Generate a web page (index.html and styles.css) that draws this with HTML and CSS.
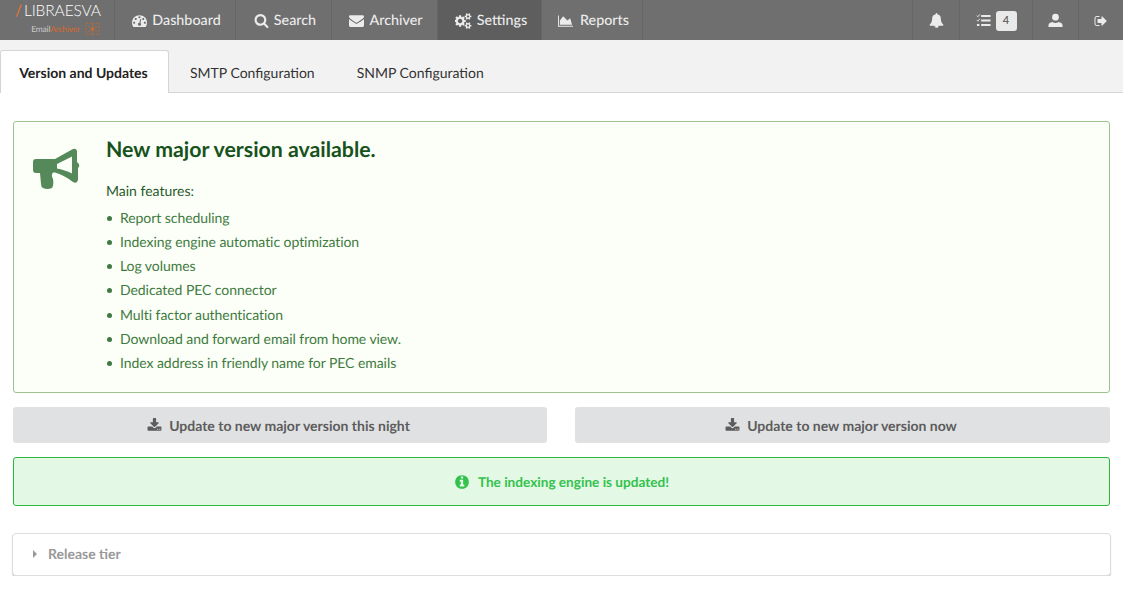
FILE: index.html
```html
<!DOCTYPE html>
<html lang="en">
<head>
  <meta charset="UTF-8">
  <title>Settings - Version and Updates</title>
  <link rel="stylesheet" href="styles.css">
</head>
<body>
  <!-- Top navigation -->
  <nav class="navbar">
    <a class="brand">
      <span class="brand-name"><span class="brand-slash">/</span>LIBRAESVA</span>
      <span class="brand-sub">
        <span class="brand-email">Email<span class="brand-archiver">Archiver</span></span>
        <svg class="brand-icon" viewBox="0 0 16 18">
          <path d="M1 3h14v12H1z" fill="none" stroke="#d9692b" stroke-width="1" stroke-dasharray="1.5 2"/>
          <path d="M8 3v12M3 6l5 3 5-3M3 12l5-3 5 3" fill="none" stroke="#d9692b" stroke-width=".6"/>
          <circle cx="8" cy="9" r="1.5" fill="#d9692b"/>
        </svg>
      </span>
    </a>
    <a class="nav-item nav-dashboard">
      <svg class="icon" viewBox="0 0 1792 1792"><path d="M384 1152q0-53-37.5-90.5t-90.5-37.5-90.5 37.5-37.5 90.5 37.5 90.5 90.5 37.5 90.5-37.5 37.5-90.5zm192-448q0-53-37.5-90.5t-90.5-37.5-90.5 37.5-37.5 90.5 37.5 90.5 90.5 37.5 90.5-37.5 37.5-90.5zm428 481l101-382q6-26-7.5-48.5t-38.5-29.5-48 6.5-30 39.5l-101 382q-60 5-107 43.5t-63 98.5q-20 77 20 146t117 89 146-20 89-117q16-60-6-117t-72-91zm660-33q0-53-37.5-90.5t-90.5-37.5-90.5 37.5-37.5 90.5 37.5 90.5 90.5 37.5 90.5-37.5 37.5-90.5zm-640-640q0-53-37.5-90.5t-90.5-37.5-90.5 37.5-37.5 90.5 37.5 90.5 90.5 37.5 90.5-37.5 37.5-90.5zm448 192q0-53-37.5-90.5t-90.5-37.5-90.5 37.5-37.5 90.5 37.5 90.5 90.5 37.5 90.5-37.5 37.5-90.5zm320 448q0 261-141 483-19 29-54 29h-1402q-35 0-54-29-141-221-141-483 0-182 71-348t191-286 286-191 348-71 348 71 286 191 191 286 71 348z"/></svg>
      Dashboard
    </a>
    <a class="nav-item nav-search">
      <svg class="icon" viewBox="0 0 1792 1792"><path d="M1216 832q0-185-131.5-316.5t-316.5-131.5-316.5 131.5-131.5 316.5 131.5 316.5 316.5 131.5 316.5-131.5 131.5-316.5zm512 832q0 52-38 90t-90 38q-54 0-90-38l-343-342q-179 124-399 124-143 0-273.5-55.5t-225-150-150-225-55.5-273.5 55.5-273.5 150-225 225-150 273.5-55.5 273.5 55.5 225 150 150 225 55.5 273.5q0 220-124 399l343 343q37 37 37 90z"/></svg>
      Search
    </a>
    <a class="nav-item nav-archiver">
      <svg class="icon" viewBox="0 0 1792 1792"><path d="M1792 710v794q0 66-47 113t-113 47h-1472q-66 0-113-47t-47-113v-794q44 49 101 87 362 246 497 345 57 42 92.5 65.5t94.5 48 110 24.5h2q51 0 110-24.5t94.5-48 92.5-65.5q170-123 498-345 57-39 100-87zm0-294q0 79-49 151t-122 123q-376 261-468 325-10 7-42.5 30.5t-54 38-52 32.5-57.5 27-50 9h-2q-23 0-50-9t-57.5-27-52-32.5-54-38-42.5-30.5q-91-64-262-182.5t-205-142.5q-62-42-117-115.5t-55-136.5q0-78 41.5-130t118.5-52h1472q65 0 112.5 47t47.5 113z"/></svg>
      Archiver
    </a>
    <a class="nav-item nav-settings active">
      <svg class="icon icon-wide" viewBox="0 0 1920 1792"><path d="M832 896q0-106-75-181t-181-75-181 75-75 181 75 181 181 75 181-75 75-181zm768 512q0-52-38-90t-90-38-90 38-38 90q0 53 37.5 90.5t90.5 37.5 90.5-37.5 37.5-90.5zm0-1024q0-52-38-90t-90-38-90 38-38 90q0 53 37.5 90.5t90.5 37.5 90.5-37.5 37.5-90.5zm-384 421v185q0 10-7 19.5t-16 10.5l-155 24q-11 35-32 76 34 48 90 115 7 11 7 20 0 12-7 19-23 30-82.5 89.5t-78.5 59.5q-11 0-21-7l-115-90q-37 19-77 31-11 108-23 155-7 24-30 24h-186q-11 0-20-7.5t-10-17.5l-23-153q-34-10-75-31l-118 89q-7 7-20 7-11 0-21-8-144-133-144-160 0-9 7-19 10-14 41-53t47-61q-23-44-35-82l-152-24q-10-1-17-9.5t-7-19.5v-185q0-10 7-19.5t16-10.5l155-24q11-35 32-76-34-48-90-115-7-11-7-20 0-12 7-20 22-30 82-89t79-59q11 0 21 7l115 90q34-18 77-32 11-108 23-154 7-24 30-24h186q11 0 20 7.5t10 17.5l23 153q34 10 75 31l118-89q8-7 20-7 11 0 21 8 144 133 144 160 0 8-7 19-12 16-42 54t-45 60q23 48 34 82l152 23q10 2 17 10.5t7 19.5zm640 533v140q0 16-149 31-12 27-30 52 51 113 51 138 0 4-4 7-122 71-124 71-8 0-46-47t-52-68q-20 2-30 2t-30-2q-14 21-52 68t-46 47q-2 0-124-71-4-3-4-7 0-25 51-138-18-25-30-52-149-15-149-31v-140q0-16 149-31 13-29 30-52-51-113-51-138 0-4 4-7 4-2 35-20t59-34 30-16q8 0 46 46.5t52 67.5q20-2 30-2t30 2q51-71 92-112l6-2q4 0 124 70 4 3 4 7 0 25-51 138 17 23 30 52 149 15 149 31zm0-1024v140q0 16-149 31-12 27-30 52 51 113 51 138 0 4-4 7-122 71-124 71-8 0-46-47t-52-68q-20 2-30 2t-30-2q-14 21-52 68t-46 47q-2 0-124-71-4-3-4-7 0-25 51-138-18-25-30-52-149-15-149-31v-140q0-16 149-31 13-29 30-52-51-113-51-138 0-4 4-7 4-2 35-20t59-34 30-16q8 0 46 46.5t52 67.5q20-2 30-2t30 2q51-71 92-112l6-2q4 0 124 70 4 3 4 7 0 25-51 138 17 23 30 52 149 15 149 31z"/></svg>
      Settings
    </a>
    <a class="nav-item nav-reports">
      <svg class="icon icon-chart" viewBox="0 0 2048 1792"><path d="M2048 1536v128h-2048v-1536h128v1408h1920zm-384-1024l256 896h-1664v-576l448-576 576 576z"/></svg>
      Reports
    </a>

    <div class="nav-right">
      <a class="nav-item nav-bell">
        <svg class="icon" viewBox="0 0 1792 1792"><path d="M912 1696q0-16-16-16-59 0-101.5-42.5t-42.5-101.5q0-16-16-16t-16 16q0 73 51.5 124.5t124.5 51.5q16 0 16-16zm816-288q0 52-38 90t-90 38h-448q0 106-75 181t-181 75-181-75-75-181h-448q-52 0-90-38t-38-90q50-42 91-88t85-119.5 74.5-158.5 50-206 19.5-260q0-152 117-282.5t307-158.5q-8-19-8-39 0-40 28-68t68-28 68 28 28 68q0 20-8 39 190 28 307 158.5t117 282.5q0 139 19.5 260t50 206 74.5 158.5 85 119.5 91 88z"/></svg>
      </a>
      <a class="nav-item nav-tasks">
        <svg class="icon" viewBox="0 0 16 16">
          <path d="M5.500 2h10v2.200h-10zM5.500 6.800h10V9h-10zM5.500 11.600h10v2.200h-10zM1 11.600h2.600v2.200H1z"/>
          <path d="M.8 7.500l1.200 1.200 2.200-2.600M.8 2.800l1.200 1.200 2.200-2.600" fill="none" stroke="currentColor" stroke-width="1"/>
        </svg>
        <span class="badge">4</span>
      </a>
      <a class="nav-item nav-user">
        <svg class="icon icon-user" viewBox="0 0 16 16">
          <circle cx="8" cy="4.500" r="3.600"/>
          <path d="M.5 15v-2c0-1.800 2-2.900 4.300-3.300 1 .6 2 .9 3.200.9s2.200-.3 3.200-.9c2.300.4 4.300 1.500 4.300 3.300v2z"/>
        </svg>
      </a>
      <a class="nav-item nav-logout">
        <svg class="icon" viewBox="0 0 1792 1792"><path d="M704 1440q0 4 1 20t.5 26.500-3 23.500-10 19.500-20.500 6.500h-320q-119 0-203.500-84.500t-84.500-203.500v-704q0-119 84.500-203.500t203.500-84.500h320q13 0 22.500 9.500t9.500 22.500q0 4 1 20t.5 26.500-3 23.500-10 19.500-20.500 6.500h-320q-66 0-113 47t-47 113v704q0 66 47 113t113 47h288 11 13t11.500 1 11.500 3 8 5.500 7 9 2 13.500zm928-544q0 26-19 45l-544 544q-19 19-45 19t-45-19-19-45v-288h-448q-26 0-45-19t-19-45v-384q0-26 19-45t45-19h448v-288q0-26 19-45t45-19 45 19l544 544q19 19 19 45z"/></svg>
      </a>
    </div>
  </nav>

  <!-- Tabs -->
  <div class="tabs">
    <a class="tab active">Version and Updates</a>
    <a class="tab">SMTP Configuration</a>
    <a class="tab">SNMP Configuration</a>
  </div>

  <main class="content">
    <section class="notice">
      <svg class="notice-icon" viewBox="0 0 48 42"><path fill-rule="evenodd" d="M3 11H22L39 1.500Q43-.5 44 3V14Q48 17 45 20V32Q44 36 40 34C33 29 28 26 22 24.500H20C18 27 19 29 20 31Q21 37 19 40Q14 42 10 40Q8 39 8 36L7 25H3Q0 25 0 22V14Q0 11 3 11ZM24 16V20.500C29 21.500 34 23 39 25.500V8.500Z"/></svg>
      <div class="notice-body">
        <h2>New major version available.</h2>
        <p>Main features:</p>
        <ul>
          <li>Report scheduling</li>
          <li>Indexing engine automatic optimization</li>
          <li>Log volumes</li>
          <li>Dedicated PEC connector</li>
          <li>Multi factor authentication</li>
          <li>Download and forward email from home view.</li>
          <li>Index address in friendly name for PEC emails</li>
        </ul>
      </div>
    </section>

    <div class="actions">
      <button class="btn">
        <svg class="icon" viewBox="0 0 1792 1792"><path d="M1344 1344q0-26-19-45t-45-19-45 19-19 45 19 45 45 19 45-19 19-45zm256 0q0-26-19-45t-45-19-45 19-19 45 19 45 45 19 45-19 19-45zm128-224v320q0 40-28 68t-68 28h-1472q-40 0-68-28t-28-68v-320q0-40 28-68t68-28h465l135 136q58 56 136 56t136-56l136-136h464q40 0 68 28t28 68zm-325-569q17 41-14 70l-448 448q-18 19-45 19t-45-19l-448-448q-31-29-14-70 17-39 59-39h256v-448q0-26 19-45t45-19h256q26 0 45 19t19 45v448h256q42 0 59 39z"/></svg>
        Update to new major version this night
      </button>
      <button class="btn">
        <svg class="icon" viewBox="0 0 1792 1792"><path d="M1344 1344q0-26-19-45t-45-19-45 19-19 45 19 45 45 19 45-19 19-45zm256 0q0-26-19-45t-45-19-45 19-19 45 19 45 45 19 45-19 19-45zm128-224v320q0 40-28 68t-68 28h-1472q-40 0-68-28t-28-68v-320q0-40 28-68t68-28h465l135 136q58 56 136 56t136-56l136-136h464q40 0 68 28t28 68zm-325-569q17 41-14 70l-448 448q-18 19-45 19t-45-19l-448-448q-31-29-14-70 17-39 59-39h256v-448q0-26 19-45t45-19h256q26 0 45 19t19 45v448h256q42 0 59 39z"/></svg>
        Update to new major version now
      </button>
    </div>

    <div class="alert">
      <svg class="icon" viewBox="0 0 1792 1792"><path d="M1152 1376v-160q0-14-9-23t-23-9h-96v-512q0-14-9-23t-23-9h-320q-14 0-23 9t-9 23v160q0 14 9 23t23 9h96v320h-96q-14 0-23 9t-9 23v160q0 14 9 23t23 9h448q14 0 23-9t9-23zm-128-896v-160q0-14-9-23t-23-9h-192q-14 0-23 9t-9 23v160q0 14 9 23t23 9h192q14 0 23-9t9-23zm640 416q0 209-103 385.500t-279.500 279.500-385.500 103-385.500-103-279.500-279.500-103-385.500 103-385.500 279.500-279.500 385.500-103 385.500 103 279.500 279.500 103 385.500z"/></svg>
      The indexing engine is updated!
    </div>

    <div class="panel">
      <span class="caret"></span>
      Release tier
    </div>
  </main>
</body>
</html>
```

FILE: styles.css
```css
* {
  box-sizing: border-box;
}

body {
  margin: 0;
  background: #fff;
  font-family: Lato, "Open Sans", sans-serif;
  font-size: 14px;
  color: #555;
  text-rendering: geometricPrecision;
}

.icon {
  width: 15px;
  height: 15px;
  fill: currentColor;
  flex: none;
}

.icon-wide {
  width: 17px;
  height: 16px;
}

.icon-chart {
  width: 15px;
  height: 14px;
}

/* Top navigation */
.navbar {
  display: flex;
  height: 40px;
  background: #6f6f6f;
  color: #ececec;
}

.brand {
  width: 115px;
  padding: 3px 0 0 15px;
  border-right: 1px solid #666;
  flex: none;
}

.brand-name {
  display: block;
  font-size: 15.500px;
  font-weight: 300;
  line-height: 17px;
  letter-spacing: -.1px;
  white-space: nowrap;
  color: #fff;
}

.brand-slash {
  color: #e8752f;
  font-weight: 400;
  margin-right: 2px;
}

.brand-sub {
  display: flex;
  justify-content: flex-end;
  align-items: center;
  gap: 5px;
  width: 85px;
  height: 18px;
}

.brand-email {
  font-size: 8.500px;
  letter-spacing: -.2px;
  color: #c8c8c8;
}

.brand-archiver {
  color: #d9692b;
}

.brand-icon {
  width: 15px;
  height: 18px;
}

.nav-item {
  display: flex;
  align-items: center;
  justify-content: center;
  gap: 5px;
  height: 40px;
  padding: 1px 0 0 3px;
  font-size: 14.300px;
  font-weight: 500;
  border-right: 1px solid #666;
  white-space: nowrap;
}

.nav-item.active {
  background: #5e5e5e;
}

.nav-dashboard { width: 121px; }
.nav-search { width: 96px; }
.nav-archiver { width: 106px; }
.nav-settings { width: 104px; }
.nav-reports { width: 101px; gap: 7px; }
.nav-bell { width: 48px; border-left: 1px solid #666; padding-left: 0; }
.nav-tasks { width: 73px; padding-left: 0; }
.nav-user { width: 46px; padding-left: 0; }
.nav-logout { width: 44px; border-right: 0; padding-left: 0; }

.nav-right {
  display: flex;
  margin-left: auto;
}

.nav-logout .icon {
  width: 14px;
  height: 14px;
}

.badge {
  display: block;
  width: 21px;
  height: 20px;
  border-radius: 3px;
  background: #e9e9e9;
  color: #555;
  font-size: 11px;
  line-height: 20px;
  text-align: center;
}

/* Tabs */
.tabs {
  display: flex;
  height: 53px;
  padding-top: 10px;
  background: #f2f2f2;
  border-bottom: 1px solid #d5d5d5;
}

.tab {
  height: 43px;
  padding: 0 21px;
  font-size: 14px;
  line-height: 45px;
  color: #333;
}

.tab.active {
  width: 169px;
  height: 43px;
  padding: 0 2px 0 0;
  text-align: center;
  font-weight: 700;
  line-height: 44px;
  color: #222;
  background: #fff;
  border: 1px solid #d5d5d5;
  border-bottom: 0;
  border-radius: 3px 3px 0 0;
}

/* Page content */
.content {
  padding: 28px 13px 0;
}

.notice {
  display: flex;
  height: 272px;
  background: #fbfff7;
  border: 1px solid #9dc38f;
  border-radius: 3px;
  color: #3f7a41;
}

.notice-icon {
  width: 48px;
  height: 42px;
  margin: 26px 0 0 19px;
  fill: #56895a;
  flex: none;
}

.notice-body {
  padding: 13px 0 0 25px;
}

.notice-body h2 {
  margin: 0;
  font-size: 21.300px;
  line-height: 28px;
  font-weight: 700;
  color: #17521c;
}

.notice-body p {
  margin: 18px 0 0;
  font-size: 14px;
  line-height: 20px;
  color: #28592b;
}

.notice-body ul {
  margin: 4.800px 0 0;
  padding: 0;
  list-style: none;
}

.notice-body li {
  position: relative;
  padding-left: 14px;
  height: 24.200px;
  font-size: 14px;
  line-height: 24px;
  letter-spacing: -.06px;
}

.notice-body li::before {
  content: "";
  position: absolute;
  left: 1px;
  top: 10px;
  width: 5px;
  height: 5px;
  border-radius: 50%;
  background: #3f7a41;
}

.actions {
  display: flex;
  gap: 28px;
  margin-top: 14px;
}

.btn {
  display: flex;
  align-items: center;
  justify-content: center;
  gap: 7px;
  flex: 1;
  height: 36px;
  padding: 0 3px 0 0;
  border: 0;
  border-radius: 3px;
  background: #e0e1e3;
  color: #5c5c5c;
  font-family: inherit;
  font-size: 14px;
  font-weight: 700;
  text-rendering: inherit;
}

.btn:first-child {
  flex: none;
  width: 534px;
}

.alert {
  display: flex;
  align-items: center;
  justify-content: center;
  gap: 8px;
  height: 49px;
  margin-top: 14px;
  background: #e3f8e5;
  border: 1px solid #2db83d;
  border-radius: 3px;
  color: #33c24d;
  font-size: 13.600px;
  font-weight: 700;
}

.alert .icon {
  width: 16px;
  height: 16px;
}

.panel {
  display: flex;
  align-items: center;
  height: 43px;
  margin: 27px -1px 0;
  padding: 0 0 2px 20px;
  background: #fff;
  border: 1px solid #ddd;
  border-radius: 4px;
  box-shadow: 0 1px 1px #ccc;
  color: #999;
  font-size: 14px;
  font-weight: 700;
}

.caret {
  width: 0;
  height: 0;
  margin-right: 11px;
  border-left: 4px solid #999;
  border-top: 4px solid transparent;
  border-bottom: 4px solid transparent;
}
```
